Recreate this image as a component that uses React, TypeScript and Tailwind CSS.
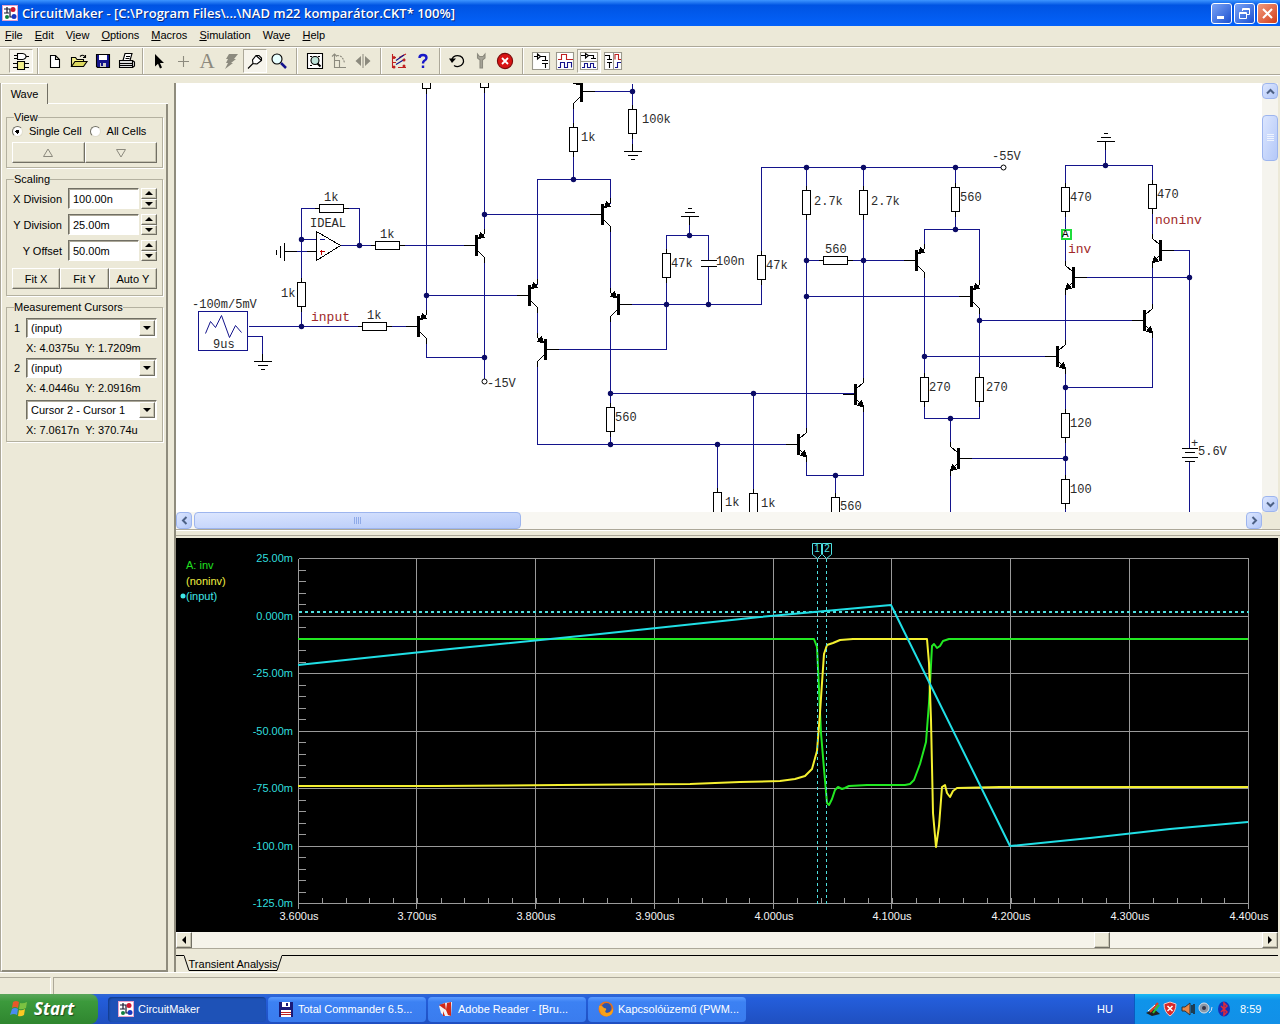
import React from "react";

const NAVY = "#14148c";

/* ---------- schematic parts ---------- */

type QProps = { x: number; y: number; flip?: boolean; npn?: boolean };

function Transistor({ x, y, flip, npn }: QProps) {
  return (
    <g transform={`translate(${x} ${y}) scale(${flip ? -1 : 1} 1)`} stroke="#000" fill="none">
      <path d="M-13 0H0M8 -17V-12L1 -6M1 5L8 12V17" />
      <rect x="-1" y="-10" width="2" height="20" fill="#000" />
      {npn ? (
        <path d="M8 12L6 6L2 11Z" fill="#000" />
      ) : (
        <path d="M2 -7L4 -13L8 -8Z" fill="#000" />
      )}
    </g>
  );
}

function ResistorV({ x, y }: { x: number; y: number }) {
  return (
    <g stroke="#000" fill="#fff">
      <path d={`M${x} ${y - 5}V${y}M${x} ${y + 24}V${y + 29}`} />
      <rect x={x - 4} y={y} width="8" height="24" />
    </g>
  );
}

function ResistorH({ x, y }: { x: number; y: number }) {
  return (
    <g stroke="#000" fill="#fff">
      <path d={`M${x - 17} ${y}H${x - 12}M${x + 12} ${y}H${x + 17}`} />
      <rect x={x - 12} y={y - 4} width="24" height="8" />
    </g>
  );
}

function Ground({ x, y, up }: { x: number; y: number; up?: boolean }) {
  const s = up ? -4 : 4;
  return (
    <path
      stroke="#000"
      d={`M${x} ${y - s * 2}V${y}M${x - 9} ${y}H${x + 9}M${x - 5} ${y + s}H${x + 5}M${x - 2} ${y + s * 2}H${x + 2}`}
    />
  );
}

const wires = [
  "M426 83V313M484 83V233M484 214H600M426 295H528",
  "M301 282V208H319M343 208H359V245M301 239H316M284 251H316M340 245H476",
  "M301 306V326M248 326H418M247 336H262V361",
  "M426 339V357H484M484 257V378",
  "M573 104V179M537 284V179H610V203M583 91H632M632 83V151",
  "M537 307V337M537 361V444H797M610 226V292M610 316V444M610 393H855",
  "M620 304H761V167H1000M666 253V235H708V260M708 266V304M666 253V349H547M689 235V216",
  "M806 167V432M863 167V382M806 260H915M806 296H970",
  "M955 167V229M924 248V229H979V284M924 272V418H979V308M979 320H1143M924 356H1056",
  "M950 418V446M950 470V512M960 458H1065",
  "M863 406V475H806V456M835 475V497M717 444V492M753 393V493",
  "M1065 265V165H1152V238M1105 165V141M1162 250H1189V448M1189 461V512M1075 277H1189",
  "M1065 289V344M1152 262V308M1152 332V387H1065M1065 368V512",
].join("");

const dots: [number, number][] = [
  [484, 214], [426, 295], [301, 239], [359, 245], [301, 326], [484, 357], [573, 179], [632, 91],
  [610, 393], [610, 444], [717, 444], [753, 393], [666, 304], [708, 304], [689, 235], [806, 167],
  [863, 167], [955, 167], [806, 260], [863, 260], [806, 296], [955, 229], [979, 320], [924, 356],
  [950, 418], [835, 475], [1105, 165], [1189, 277], [1065, 387], [1065, 458],
];

const transistors: QProps[] = [
  { x: 476, y: 245 }, { x: 418, y: 326 }, { x: 529, y: 295 }, { x: 602, y: 214 },
  { x: 618, y: 304, flip: true }, { x: 545, y: 349, flip: true }, { x: 581, y: 91, flip: true },
  { x: 916, y: 260 }, { x: 971, y: 296 }, { x: 855, y: 394, npn: true }, { x: 798, y: 444, npn: true },
  { x: 958, y: 458, flip: true, npn: true }, { x: 1073, y: 277, flip: true, npn: true },
  { x: 1160, y: 250, flip: true, npn: true }, { x: 1144, y: 320, npn: true }, { x: 1057, y: 356, npn: true },
];

const vertical: [number, number][] = [
  [301, 282], [573, 127], [632, 109], [666, 253], [761, 255], [610, 407], [717, 492], [753, 493],
  [806, 190], [863, 190], [955, 187], [924, 377], [979, 377], [835, 497], [1065, 187], [1152, 184],
  [1065, 413], [1065, 479], [426, 64], [484, 63],
];

const horizontal: [number, number][] = [[331, 208], [387, 245], [374, 326], [835, 260]];

const values: [number, number, string][] = [
  [324, 201, "1k"], [380, 238, "1k"], [367, 319, "1k"], [281, 297, "1k"], [310, 227, "IDEAL"],
  [192, 308, "-100m/5mV"], [213, 348, "9us"], [487, 387, "-15V"], [581, 141, "1k"], [642, 123, "100k"],
  [671, 267, "47k"], [716, 265, "100n"], [766, 269, "47k"], [615, 421, "560"], [725, 506, "1k"],
  [761, 507, "1k"], [814, 205, "2.7k"], [871, 205, "2.7k"], [825, 253, "560"], [960, 201, "560"],
  [992, 160, "-55V"], [929, 391, "270"], [986, 391, "270"], [840, 510, "560"], [1070, 201, "470"],
  [1157, 198, "470"], [1070, 427, "120"], [1070, 493, "100"], [1198, 455, "5.6V"], [1191, 447, "+"],
];

const nets: [number, number, string][] = [[311, 321, "input"], [1155, 224, "noninv"], [1068, 253, "inv"]];

function Schematic() {
  return (
    <svg
      width="1086"
      height="429"
      viewBox="175.5 82.5 1086 429"
      className="block shrink-0 font-['Liberation_Mono',monospace]"
      shapeRendering="crispEdges"
      fill="none"
      role="img"
      aria-label="Comparator schematic"
    >
      <path d={wires} stroke={NAVY} />
      {vertical.map(([x, y]) => <ResistorV key={`${x}-${y}`} x={x} y={y} />)}
      {horizontal.map(([x, y]) => <ResistorH key={`${x}-${y}`} x={x} y={y} />)}
      {transistors.map((t) => <Transistor key={`${t.x}-${t.y}`} {...t} />)}
      <Ground x={262} y={361} />
      <Ground x={632} y={151} />
      <Ground x={689} y={216} up />
      <Ground x={1105} y={141} up />
      <path stroke="#000" d="M284 242V260M280 245V257M276 249V254M284 251H296M306 251H316" />
      <path stroke="#000" fill="#fff" d="M316 231L340 245L316 260Z" />
      <path stroke={NAVY} d="M319 239H324" />
      <path stroke="#c00000" d="M319 251H324M321 249V254" />
      <rect x="700" y="261" width="16" height="5" fill="#fff" />
      <path stroke="#000" d="M700 260H716M700 266H716" />
      <path stroke="#000" d="M1181 448H1197M1184 452H1194M1181 457H1197M1184 461H1194" />
      <rect x="198" y="311" width="49" height="39" stroke={NAVY} fill="#fff" />
      <path stroke={NAVY} d="M205 333L210 321L215 327L221 315L229 337L235 325L241 332" shapeRendering="auto" />
      <g shapeRendering="auto">
        {dots.map(([x, y]) => <circle key={`${x}-${y}`} cx={x} cy={y} r="2.7" fill="#0b0b66" />)}
        <circle cx="484" cy="381" r="2.5" fill="#fff" stroke="#000" />
        <circle cx="1003" cy="167" r="2.5" fill="#fff" stroke="#000" />
      </g>
      <rect x="1061" y="229" width="9" height="9" fill="#fff" stroke="#1fdc3c" strokeWidth="2" />
      <g transform="translate(-.5 -.5)">
        <text x="1062" y="237" fontSize="11" fill="#000">A</text>
        {values.map(([x, y, t]) => (
          <text key={`${x}-${y}`} x={x} y={y} fontSize="12" fill="#2a2a2a">{t}</text>
        ))}
        {nets.map(([x, y, t]) => (
          <text key={t} x={x} y={y} fontSize="13" fill="#a02828">{t}</text>
        ))}
      </g>
    </svg>
  );
}

/* ---------- wave plot ---------- */

const gridX = [298, 416, 535, 654, 773, 891, 1010, 1129, 1248];
const gridY = [558, 616, 673, 731, 788, 846, 903];
const yLabels = ["25.00m", "0.000m", "-25.00m", "-50.00m", "-75.00m", "-100.0m", "-125.0m"];
const xLabels = ["3.600us", "3.700us", "3.800us", "3.900us", "4.000us", "4.100us", "4.200us", "4.300us", "4.400us"];

function Plot() {
  const ticksY = Array.from({ length: 30 }, (_, i) => Math.round(558 + i * 11.5));
  const ticksX = Array.from({ length: 40 }, (_, i) => Math.round(298 + i * 23.75));
  return (
    <svg
      width="1102"
      height="394"
      viewBox="175.5 537.5 1102 394"
      className="block shrink-0 font-['Liberation_Sans',Arial,sans-serif]"
      fill="none"
      role="img"
      aria-label="Transient analysis waveforms"
    >
      <g stroke="#9a9a9a" shapeRendering="crispEdges">
        {gridX.map((x) => <path key={x} d={`M${x} 558V908`} />)}
        {gridY.map((y) => <path key={y} d={`M298 ${y}H1248`} />)}
        {ticksY.map((y) => <path key={y} d={`M298 ${y}H305`} />)}
        {ticksX.map((x) => <path key={x} d={`M${x} 897V903`} />)}
      </g>
      <path d="M298 611H1248" stroke="#4fe0e0" strokeWidth="2" strokeDasharray="3 3" shapeRendering="crispEdges" />
      <g strokeWidth="2" strokeLinejoin="round" transform="translate(-.5 -.5)">
        <path
          stroke="#22e822"
          d="M298 639H814L817 647L819 689L821 733L824 769L827 803L829 805L832 799L835 790L838 787L842 789L845 788L849 786L867 785H905L910 784L914 780L920 764L926 742L929 703L932 646L934 644L937 648L940 646L943 641L949 639H1248"
        />
        <path
          stroke="#f4f030"
          d="M298 786H435L560 785L690 784L740 782L780 781L795 779L805 776L812 769L817 751L820 713L822 683L824 654L827 645L833 643L840 640L853 639H927L929 663L931 720L933 813L936 847L939 826L942 787L945 785L947 793L950 797L953 791L957 788L1000 787H1248"
        />
        <path stroke="#20dfe6" d="M298 665L450 649L600 634L760 617L891 605L1010 846L1090 838L1170 829L1248 822" />
      </g>
      <g stroke="#4fe0e0">
        <path d="M817 558V903M826 558V903" strokeDasharray="3 3" shapeRendering="crispEdges" />
        <path fill="#000" d="M812 543H821V554L817 558L812 554ZM822 543H831V554L826 558L822 554Z" />
      </g>
      <g transform="translate(-.5 -.5)">
        <g fontSize="10" fill="#4fe0e0" textAnchor="middle">
          <text x="817" y="552">1</text>
          <text x="827" y="552">2</text>
        </g>
        <g fontSize="11">
          <text x="186" y="569" fill="#20e020">A: inv</text>
          <text x="186" y="585" fill="#f0f040">(noninv)</text>
          <text x="186" y="600" fill="#40e8e8">(input)</text>
          <circle cx="183" cy="596" r="2.5" fill="#40e8e8" />
          {yLabels.map((t, i) => (
            <text key={t} x="293" y={gridY[i] + 4} textAnchor="end" fill="#30dede">{t}</text>
          ))}
          {xLabels.map((t, i) => (
            <text key={t} x={gridX[i] + 1} y="920" textAnchor="middle" fill="#f4f4f4">{t}</text>
          ))}
        </g>
      </g>
    </svg>
  );
}

/* ---------- toolbar ---------- */

function Icon({ children }: { children: React.ReactNode }) {
  return (
    <svg width="20" height="20" viewBox="0 0 20 20" fill="none" stroke="#000" strokeWidth="1.1" className="shrink-0" aria-hidden="true">
      {children}
    </svg>
  );
}

type Tool = { name: string; pressed?: boolean; art: React.ReactNode };

const frame = <path fill="#fff" stroke="#9a988c" d="M1.500 1.500H18.500V18.500H1.500Z" />;

const toolGroups: { gap: string; tools: Tool[] }[] = [
  {
    gap: "",
    tools: [
      {
        name: "Parts", pressed: true,
        art: <g><path fill="#fff" d="M6.500 2.500H11.500Q15 3 15 5.500Q15 8 11.500 8.500H6.500Z" /><path d="M3 4.500H6M3 7.500H6M15 5.500H18M2 12.500H6M2 16.500H6M14 12.500H18M14 16.500H18" /><path fill="#f3f08a" d="M6.500 10.500H13.500V18.500H6.500Z" /></g>,
      },
    ],
  },
  {
    gap: "mx-1",
    tools: [
      { name: "New", art: <path fill="#fff" d="M5.500 4.500H10.500L14.500 8.500V16.500H5.500ZM10.500 4.500V8.500H14.500" /> },
      { name: "Open", art: <g><path fill="#f3f08a" d="M2.500 15.500V6.500H6.500L8 8.500H14.500V10.500" /><path fill="#dcd860" d="M2.500 15.500L6 10.500H18L14.500 15.500Z" /><path d="M11 5.500Q14 2.500 16.500 6.500M16.500 4V6.500H14" /></g> },
      { name: "Save", art: <g><path fill="#14148c" d="M3.500 3.500H16.500V16.500H4.500L3.500 15.500Z" /><path fill="#fff" stroke="none" d="M6 4H14V9H6Z" /><path fill="#ccc" stroke="none" d="M7 12H13V16H7Z" /><path fill="#14148c" stroke="none" d="M8 12H10V15H8Z" /></g> },
      { name: "Print", art: <g><path fill="#fff" d="M6 9.500L8 2.500H15L13 9.500" /><path d="M9 5.500H13M8.500 7.500H12.500" /><path fill="#ddd" d="M2.500 9.500H15.500V16.500H2.500ZM15.500 9.500L17.500 11V15L15.500 16.500M2.500 12.500H15.500M2.500 14.500H15.500" /></g> },
    ],
  },
  {
    gap: "mx-[3px]",
    tools: [
      { name: "Select", art: <path fill="#000" stroke="none" d="M6 3V15.500L9 12.700L11 17.500L13 16.600L11 12H15Z" /> },
      { name: "Wire", art: <path stroke="#8c8a7e" d="M10.500 5V16M5 10.500H16" /> },
      { name: "Text", art: <text x="10" y="17" textAnchor="middle" fontSize="21" fill="#8c8a7e" stroke="none" className="font-['Liberation_Serif',serif]">A</text> },
      { name: "Delete", art: <path fill="#8c8a7e" stroke="none" d="M8 3H17L13 8H15L10 12H12L4 18L7 12H5L7 8H5Z" /> },
      { name: "Probe", pressed: true, art: <path fill="#fff" d="M3 17.500L8 12.500L7.500 9L11 4.500H14L16.500 7V9.500L12 13L8 12.500M11 4.500L16.500 9.500" /> },
      { name: "Zoom", art: <g><circle cx="8" cy="8" r="5" fill="#e8ffff" /><path stroke="#14148c" strokeWidth="2.500" d="M12 12L17 17" /></g> },
    ],
  },
  {
    gap: "mx-[5px]",
    tools: [
      { name: "Fit", art: <g><path fill="#fff" d="M2.500 2.500H17.500V17.500H2.500ZM5 5.500H7M13 5.500H15M5 14.500H7" /><circle cx="10" cy="9.500" r="4" fill="#bfe3da" /><path strokeWidth="2" d="M12.500 12.500L15.500 15.500" /></g> },
      { name: "Rotate", art: <g stroke="#8c8a7e"><path d="M5.500 3V16.500H17M5.500 9.500H10.500V16.500" /><path strokeDasharray="2 1" d="M8 4.500Q14 4.500 15.500 12" /><path d="M3 5.500L5.500 3L8 5.500" /></g> },
      { name: "Mirror", art: <g fill="#8c8a7e" stroke="none"><path d="M8 5V15L2.500 10ZM12 5V15L17.500 10Z" /><path d="M9.500 3H10.500V17H9.500Z" /></g> },
    ],
  },
  {
    gap: "mx-[5px]",
    tools: [
      { name: "Check", art: <g><path stroke="#c02020" d="M3.500 3V17M3.500 6.500H7M3.500 11.500H7M10 6.500L17 3M9 16.500H17" /><path stroke="#14148c" d="M7 9.500L15 4M7 13.500L16 8" /><g fill="#c02020" stroke="none"><circle cx="5" cy="6.500" r="1.500" /><circle cx="15" cy="9" r="1.500" /><circle cx="5" cy="16" r="1.500" /><circle cx="15" cy="15" r="1.500" /></g></g> },
      { name: "Help", art: <g stroke="#1818c8" strokeWidth="2.400"><path d="M6.500 7Q6.500 4 10 4Q13.500 4 13.500 7Q13.500 8.500 11 10Q10 10.800 10 12.500" /><path d="M10 14.500V17" /></g> },
    ],
  },
  {
    gap: "mx-1",
    tools: [
      { name: "Reset", art: <g><path strokeWidth="1.300" d="M5 8A6 5.500 0 1 1 7 14.500" /><path fill="#000" stroke="none" d="M2 7.500H9L5 12Z" /></g> },
      { name: "Step", art: <path fill="#a6a498" stroke="#8c8a7e" d="M6.500 3V7L9 9V17H11.500V9L14 7V3L12 5.500H8.500Z" /> },
      { name: "Stop", art: <g><circle cx="10" cy="10" r="7.600" fill="#d81414" stroke="#7a0c0c" /><path stroke="#fff" strokeWidth="1.800" d="M7 7L13 13M13 7L7 13" /></g> },
    ],
  },
  {
    gap: "mx-[5px]",
    tools: [
      { name: "Schematic view", art: <g>{frame}<path d="M3 5.500H6M6.500 3V8L9.500 5.500ZM9.500 5.500H14.500V9.500M11 9.500H17M11 12.500H17M14.500 12.500V17" /></g> },
      { name: "Waveform view", art: <g>{frame}<path stroke="#c02020" d="M3 8.500H6.500V3.500H11.500V8.500H18" /><path stroke="#14148c" d="M3 16.500H5.500V11.500H9.500V16.500H12.500V11.500H16.500V16.500" /></g> },
      { name: "Split horizontally", pressed: true, art: <g>{frame}<path d="M2 4.500H6M6.500 2.500V7L9.500 4.500ZM9.500 4.500H14.500V7.500M12 7.500H17" /><path stroke="#9a988c" d="M2 10.500H18" /><path stroke="#14148c" d="M3 16.500H5.500V12.500H8.500V16.500H11.500V12.500H14.500V16.500H17" /></g> },
      { name: "Split vertically", art: <g>{frame}<path stroke="#9a988c" d="M10.500 2V18" /><path d="M2 4.500H6.500V8M4 8.500H9M4 11.500H9M6.500 12V17" /><path stroke="#c02020" d="M12 8.500V3.500H15.500V8.500H18" /><path stroke="#14148c" d="M12 16.500H14.500V11.500H18" /></g> },
    ],
  },
];

const menus: [string, string, string][] = [
  ["", "F", "ile"], ["", "E", "dit"], ["V", "i", "ew"], ["", "O", "ptions"],
  ["", "M", "acros"], ["", "S", "imulation"], ["Wa", "v", "e"], ["", "H", "elp"],
];

function AppIcon() {
  return (
    <svg width="16" height="16" viewBox="0 0 16 16" className="shrink-0" aria-hidden="true">
      <rect width="16" height="16" fill="#fff" />
      <rect x=".5" y=".5" width="15" height="15" fill="none" stroke="#e4a0c8" />
      <path d="M2 4H8V12H11M5 2V8M2 8H7" stroke="#181830" strokeWidth="1.200" fill="none" />
      <circle cx="11" cy="4.500" r="2.500" fill="#d01830" />
      <circle cx="5" cy="12" r="2" fill="#108040" />
      <circle cx="12" cy="11.500" r="2.500" fill="#1838c0" />
    </svg>
  );
}

/* ---------- sidebar controls ---------- */

const raised = "border border-t-white border-l-white border-r-[#716f64] border-b-[#716f64] bg-[#ece9d8] shadow-[inset_-1px_-1px_0_#c5c2b0]";
const sunken = "border border-t-[#716f64] border-l-[#716f64] border-r-white border-b-white bg-white shadow-[inset_1px_1px_0_#aca899]";
const group = "min-w-0 border border-[#b4b1a0] px-[5px] shadow-[1px_1px_0_#fff]";

function Triangle({ dir }: { dir: "up" | "down" | "left" | "right" }) {
  const d = { up: "M0 5L4 1L8 5Z", down: "M0 1L4 5L8 1Z", left: "M6 0L2 4L6 8Z", right: "M2 0L6 4L2 8Z" }[dir];
  return <svg width="8" height={dir === "up" || dir === "down" ? 6 : 8} fill="#000" aria-hidden="true"><path d={d} /></svg>;
}

function Field({ id, label, value }: { id: string; label: string; value: string }) {
  return (
    <div className="mb-[5px] flex h-[21px] items-center">
      <label htmlFor={id} className="mr-[6px] flex-1 text-right whitespace-nowrap">{label}</label>
      <input id={id} defaultValue={value} className={`h-[21px] w-[71px] px-1 outline-none ${sunken}`} />
      <div className="ml-0.5 flex h-[21px] w-4 flex-col">
        <button aria-label={`Increase ${label}`} className={`flex flex-1 items-center justify-center ${raised}`}><Triangle dir="up" /></button>
        <button aria-label={`Decrease ${label}`} className={`flex flex-1 items-center justify-center ${raised}`}><Triangle dir="down" /></button>
      </div>
    </div>
  );
}

function Combo({ id, label, value, readout, unnumbered }: { id: string; label: string; value: string; readout: string; unnumbered?: boolean }) {
  return (
    <div className={unnumbered ? "pt-0.5" : ""}>
      <div className="flex h-5 items-center">
        {unnumbered ? <span className="w-[14px] shrink-0" /> : <label htmlFor={id} className="w-[14px] shrink-0 pl-0.5">{label}</label>}
        <div className="relative flex-1">
          <select id={id} aria-label={unnumbered ? label : undefined} className={`block h-5 w-full appearance-none pl-1 outline-none ${sunken}`}>
            <option>{value}</option>
          </select>
          <span className={`pointer-events-none absolute top-0.5 right-0.5 flex h-4 w-4 items-center justify-center ${raised}`}><Triangle dir="down" /></span>
        </div>
      </div>
      <p className="py-[3px] pl-[14px] leading-[14px] whitespace-pre">{readout}</p>
    </div>
  );
}

function Sidebar() {
  return (
    <aside className="flex w-[168px] shrink-0 flex-col border-l border-[#aca899]">
      <div className="flex">
        <button className="h-[21px] w-[47px] border-t border-r border-l border-t-white border-r-[#716f64] border-l-white">Wave</button>
        <div className="flex-1 border-b border-white" />
      </div>
      <div className="flex flex-1 flex-col gap-1 border-r-2 border-b-2 border-l border-r-[#8f8c7d] border-b-[#8f8c7d] border-l-white pt-[6px] pr-[3px] pl-1">
        <fieldset className={`h-[58px] ${group}`}>
          <legend className="ml-0.5 leading-[14px]">View</legend>
          <div className="flex h-[14px] items-center gap-2">
            {["Single Cell", "All Cells"].map((t, i) => (
              <label key={t} className="flex items-center gap-1.5 whitespace-nowrap">
                <input
                  type="radio"
                  name="cells"
                  defaultChecked={i === 0}
                  className="h-[11px] w-[11px] appearance-none rounded-full border border-t-[#716f64] border-r-[#e0ddcc] border-b-[#e0ddcc] border-l-[#716f64] bg-white checked:bg-[radial-gradient(circle,#000_2px,#fff_2px)]"
                />
                {t}
              </label>
            ))}
          </div>
          <div className="mt-1 flex h-[21px]">
            <button aria-label="Previous cell" className={`flex flex-1 items-center justify-center ${raised}`}>
              <svg width="12" height="10" fill="none" stroke="#8c8a7e"><path d="M1.500 8.500L6 1L10.500 8.500Z" /></svg>
            </button>
            <button aria-label="Next cell" className={`flex flex-1 items-center justify-center ${raised}`}>
              <svg width="12" height="10" fill="none" stroke="#8c8a7e"><path d="M1.500 1.500L6 9L10.500 1.500Z" /></svg>
            </button>
          </div>
        </fieldset>
        <fieldset className={`h-[124px] ${group}`}>
          <legend className="ml-0.5 leading-[14px]">Scaling</legend>
          <div className="h-0.5" />
          <Field id="xdiv" label="X Division" value="100.00n" />
          <Field id="ydiv" label="Y Division" value="25.00m" />
          <Field id="yoff" label="Y Offset" value="50.00m" />
          <div className="mt-[7px] flex h-[21px]">
            {["Fit X", "Fit Y", "Auto Y"].map((t) => <button key={t} className={`flex-1 ${raised}`}>{t}</button>)}
          </div>
        </fieldset>
        <fieldset className={`h-[142px] ${group}`}>
          <legend className="ml-0.5 leading-[14px]">Measurement Cursors</legend>
          <div className="h-1" />
          <Combo id="c1" label="1" value="(input)" readout="X: 4.0375u  Y: 1.7209m" />
          <Combo id="c2" label="2" value="(input)" readout="X: 4.0446u  Y: 2.0916m" />
          <Combo id="c3" label="Cursor difference" value="Cursor 2 - Cursor 1" readout="X: 7.0617n  Y: 370.74u" unnumbered />
        </fieldset>
      </div>
    </aside>
  );
}

/* ---------- scroll bars ---------- */

const xpButton = "flex shrink-0 items-center justify-center rounded-sm border border-[#9db5ee] bg-linear-to-br from-[#dce6fe] to-[#b4c8f8]";

function Chevron({ turn }: { turn: string }) {
  return (
    <svg width="9" height="9" viewBox="0 0 9 9" className={turn} fill="none" stroke="#4d6185" strokeWidth="2" aria-hidden="true">
      <path d="M1 6.500L4.500 3L8 6.500" />
    </svg>
  );
}

const tasks = [
  { name: "CircuitMaker", icon: <AppIcon /> },
  {
    name: "Total Commander 6.5...",
    icon: <svg width="16" height="16" aria-hidden="true"><path fill="#1a1a78" d="M1 1H15V16H1Z" /><path fill="#fff" d="M4 1H12V6H4ZM3 9H13V16H3Z" /><path fill="#1a1a78" d="M8 2H10V5H8Z" /><path stroke="#c02020" d="M3 11.500H13M3 13.500H13" /></svg>,
  },
  {
    name: "Adobe Reader - [Bru...",
    icon: <svg width="16" height="16" aria-hidden="true"><path fill="#f4f0f0" d="M1 5L6 2L14 1L13 15H6L3 12Z" /><path fill="#d02818" d="M1 4L7 2L8 9L5 7ZM9 2L13 1V15L10 14L8 9Z" /><path fill="#d02818" d="M5 10L7 15H5Z" /></svg>,
  },
  {
    name: "Kapcsolóüzemű (PWM...",
    icon: <svg width="16" height="16" aria-hidden="true"><circle cx="8" cy="8" r="7.500" fill="#e8711a" /><circle cx="8.500" cy="7" r="5" fill="#2c55b0" /><path fill="#f7a11b" d="M1 5Q4 4 6 7Q9 7 8 9Q6 11 9 12Q13 12 15 7Q16 14 9 15.500Q1 15 1 5Z" /></svg>,
  },
];

const captionBtn = "flex h-[21px] w-[21px] items-center justify-center rounded-[3px] border border-white";

export default function App() {
  return (
    <div className="flex h-screen flex-col overflow-hidden bg-[#ece9d8] font-['Liberation_Sans',Arial,sans-serif] text-[11px] leading-[14px] text-black">
      <header className="flex h-[26px] shrink-0 items-center bg-linear-to-b from-[#3d95ff] via-[#0054e3] via-20% to-[#0462fa] pr-0.5 pl-0.5">
        <AppIcon />
        <h1 className="ml-1 flex-1 truncate font-['Open_Sans','Noto_Sans',sans-serif] text-[13px] leading-5 font-semibold text-white [text-shadow:1px_1px_0_#0a2a80]">
          CircuitMaker - [C:\Program Files\...\NAD m22 komparátor.CKT* 100%]
        </h1>
        <div className="flex gap-0.5">
          <button aria-label="Minimize" className={`${captionBtn} bg-linear-to-br from-[#7ba3f5] to-[#1c4fd0]`}>
            <svg width="13" height="13"><path fill="#fff" d="M2 9H9V12H2Z" /></svg>
          </button>
          <button aria-label="Restore" className={`${captionBtn} bg-linear-to-br from-[#7ba3f5] to-[#1c4fd0]`}>
            <svg width="13" height="13" fill="none" stroke="#fff"><path d="M4.500 4V1.500H11.500V7.500H9M4.500 2.500H11.500M1.500 5.500H8.500V11.500H1.500ZM1.500 6.500H8.500" /></svg>
          </button>
          <button aria-label="Close" className={`${captionBtn} bg-linear-to-br from-[#f0997c] to-[#d23a12]`}>
            <svg width="13" height="13" stroke="#fff" strokeWidth="2"><path d="M2 2L11 11M11 2L2 11" /></svg>
          </button>
        </div>
      </header>

      <nav className="flex h-[18px] shrink-0 items-center gap-3 pl-[5px]">
        {menus.map(([a, u, b]) => <button key={a + u + b}>{a}<span className="underline">{u}</span>{b}</button>)}
      </nav>

      <div className="mt-0.5 flex h-[29px] shrink-0 items-center border-t border-b border-[#aca899] pl-[9px] shadow-[inset_0_1px_0_#fff,0_1px_0_#fff]">
        {toolGroups.map((g, i) => (
          <React.Fragment key={i}>
            {i > 0 && <span className={`box-content h-[26px] w-px border-r border-white bg-[#aca899] ${g.gap}`} />}
            {g.tools.map((t) => (
              <button
                key={t.name}
                aria-label={t.name}
                className={`flex h-6 w-6 items-center justify-center border ${t.pressed ? "border-t-[#aca899] border-r-white border-b-white border-l-[#aca899] bg-[#f6f4ec]" : "border-transparent"}`}
              >
                <Icon>{t.art}</Icon>
              </button>
            ))}
          </React.Fragment>
        ))}
      </div>

      <main className="flex min-h-0 flex-1 pt-2">
        <Sidebar />
        <div className="ml-[6px] flex min-w-0 flex-1 flex-col border-l-2 border-[#8f8c7d]">
          <section className="flex min-h-0 flex-1 flex-col border-b border-[#aca899] pr-0.5">
            <div className="flex min-h-0 flex-1">
              <div className="min-w-0 flex-1 overflow-hidden bg-white"><Schematic /></div>
              <div className="flex w-4 shrink-0 flex-col bg-[#f5f4ee]">
                <button aria-label="Scroll up" className={`h-4 ${xpButton}`}><Chevron turn="" /></button>
                <div className="h-4" />
                <div className={`h-[46px] ${xpButton}`}>
                  <svg width="7" height="8" stroke="#eef4fe" aria-hidden="true"><path d="M0 .5H7M0 2.500H7M0 4.500H7M0 6.500H7" /></svg>
                </div>
                <div className="flex-1" />
                <button aria-label="Scroll down" className={`h-4 ${xpButton}`}><Chevron turn="rotate-180" /></button>
              </div>
            </div>
            <div className="mr-4 flex h-[17px] shrink-0 bg-[#f8f7f2]">
              <button aria-label="Scroll left" className={`w-4 ${xpButton}`}><Chevron turn="-rotate-90" /></button>
              <div className="w-0.5" />
              <div className={`w-[327px] ${xpButton}`}>
                <svg width="8" height="7" stroke="#8faae8" aria-hidden="true"><path d="M.5 0V7M2.500 0V7M4.500 0V7M6.500 0V7" /></svg>
              </div>
              <div className="flex-1" />
              <button aria-label="Scroll right" className={`w-4 ${xpButton}`}><Chevron turn="rotate-90" /></button>
            </div>
          </section>

          <div className="h-2 shrink-0 border-t border-white">
            <div className="mt-1 border-t border-[#aca899]" />
          </div>

          <section className="shrink-0 pr-0.5">
            <div className="overflow-hidden bg-black"><Plot /></div>
            <div className="flex h-[17px] border-b border-[#aca899] bg-[#f5f3ea]">
              <button aria-label="Scroll left" className={`flex w-4 items-center justify-center ${raised}`}><Triangle dir="left" /></button>
              <div className="flex-1" />
              <div className={`w-4 ${raised}`} />
              <div className="w-[152px]" />
              <button aria-label="Scroll right" className={`flex w-4 items-center justify-center ${raised}`}><Triangle dir="right" /></button>
            </div>
            <div className="mt-[6px] flex h-[17px]">
              <div className="w-2 border-t border-black" />
              <button className="relative w-[98px] text-center">
                <svg width="98" height="17" className="absolute top-0 left-0" fill="none" stroke="#000" aria-hidden="true"><path d="M0 .5L5 15.500H93L98 .5" /></svg>
                Transient Analysis
              </button>
              <div className="flex-1 border-t border-black" />
            </div>
          </section>
        </div>
      </main>

      <div className="flex h-[22px] shrink-0 gap-0.5 border-t border-white pt-1">
        <div className="w-[51px] border-t border-r border-[#aca899] border-r-white" />
        <div className="flex-1 border-t border-l border-[#aca899]" />
      </div>

      <footer className="flex h-[30px] shrink-0 items-center bg-linear-to-b from-[#3168d5] via-[#245edb] via-15% to-[#1f4fc0] text-white">
        <button className="flex h-full w-[98px] items-center gap-[5px] rounded-r-lg bg-linear-to-b from-[#5aa65a] via-[#3c9a3c] via-25% to-[#2f862f] pl-[10px] font-['Noto_Sans','Open_Sans',sans-serif] text-[17px] font-bold italic [text-shadow:1px_1px_1px_#1d4d1d]">
          <svg width="19" height="18" viewBox="0 0 19 18" aria-hidden="true">
            <path fill="#e8582a" d="M3 2Q6 0 9 2L8 8Q5 6 2 8Z" />
            <path fill="#7cc242" d="M10 3Q13 4 17 2L16 8Q12 10 9 9Z" />
            <path fill="#4a8cf0" d="M2 9Q5 7 8 9L7 15Q4 13 0 15Z" />
            <path fill="#fbc824" d="M9 10Q12 11 15 9L14 15Q11 17 8 16Z" />
          </svg>
          Start
        </button>
        <div className="ml-[10px] flex flex-1 gap-0.5">
          {tasks.map((t, i) => (
            <button
              key={t.name}
              className={`flex h-[25px] w-[158px] items-center gap-1 rounded-sm pl-[10px] ${i === 0 ? "bg-[#1e52b7] shadow-[inset_1px_1px_2px_#123a88]" : "bg-linear-to-b from-[#5b9bff] via-[#3c81f3] via-20% to-[#3a7cee]"}`}
            >
              {t.icon}
              <span className="whitespace-nowrap">{t.name}</span>
            </button>
          ))}
        </div>
        <span className="mr-[21px]">HU</span>
        <div className="flex h-full w-[146px] items-center gap-1 border-l border-[#0a5bc0] bg-linear-to-b from-[#19b9f4] via-[#0f94ea] via-20% to-[#1290e8] pl-[11px]">
          <svg width="86" height="16" viewBox="0 0 86 16" aria-hidden="true">
            <path fill="#222" d="M0 12L8 8L14 13L6 15Z" /><path stroke="#e04020" strokeWidth="2" d="M4 11L12 2" /><path stroke="#30c030" strokeWidth="2" d="M7 12L13 4" /><path stroke="#fff" d="M2 10L9 4" />
            <path fill="#d82828" stroke="#f4c8c8" d="M18 3L24 1L30 3Q30 11 24 15Q18 11 18 3Z" /><path stroke="#fff" strokeWidth="1.500" d="M21.500 5L26.500 10M26.500 5L21.500 10" />
            <path fill="#e88848" stroke="#333" d="M36 6H39L44 2V14L39 10H36Z" /><path stroke="#222" fill="none" strokeWidth="1.500" d="M46 4V12M48 3V13" />
            <circle cx="58" cy="7" r="5" fill="#8a98a8" stroke="#d8e0e8" /><circle cx="58" cy="7" r="2" fill="#334" /><path stroke="#dde" fill="none" d="M63 12Q66 10 66 6" />
            <ellipse cx="78" cy="8" rx="6" ry="7.500" fill="#1430b8" /><path stroke="#e02838" fill="none" strokeWidth="1.500" d="M75 5L81 11L78 14V2L81 5L75 11" />
          </svg>
          <time className="ml-1">8:59</time>
        </div>
      </footer>
    </div>
  );
}
